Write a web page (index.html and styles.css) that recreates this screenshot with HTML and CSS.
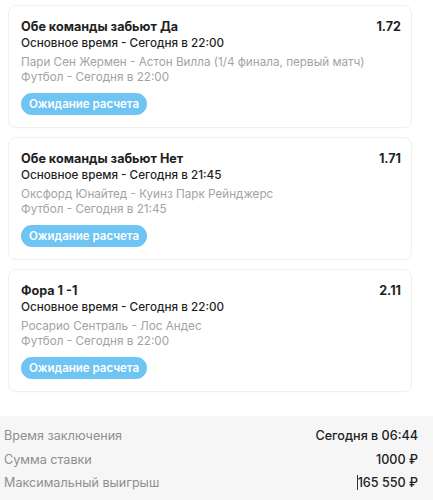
FILE: index.html
```html
<!DOCTYPE html>
<html lang="ru">

<head>
  <meta charset="UTF-8">
  <title>Купон</title>
  <link rel="stylesheet" href="styles.css">
</head>

<body>
  <div class="betList">
    <div class="betCard">
      <div class="betHead">
        <span class="betTitle">Обе команды забьют Да</span>
        <span class="betCoef">1.72</span>
      </div>
      <div class="betPeriod">Основное время - Сегодня в 22:00</div>
      <div class="betMeta">Пари Сен Жермен - Астон Вилла (1/4 финала, первый матч)</div>
      <div class="betMeta">Футбол - Сегодня в 22:00</div>
      <span class="betStatus">Ожидание расчета</span>
    </div>

    <div class="betCard">
      <div class="betHead">
        <span class="betTitle">Обе команды забьют Нет</span>
        <span class="betCoef">1.71</span>
      </div>
      <div class="betPeriod">Основное время - Сегодня в 21:45</div>
      <div class="betMeta">Оксфорд Юнайтед - Куинз Парк Рейнджерс</div>
      <div class="betMeta">Футбол - Сегодня в 21:45</div>
      <span class="betStatus">Ожидание расчета</span>
    </div>

    <div class="betCard">
      <div class="betHead">
        <span class="betTitle">Фора 1 -1</span>
        <span class="betCoef">2.11</span>
      </div>
      <div class="betPeriod">Основное время - Сегодня в 22:00</div>
      <div class="betMeta">Росарио Сентраль - Лос Андес</div>
      <div class="betMeta">Футбол - Сегодня в 22:00</div>
      <span class="betStatus">Ожидание расчета</span>
    </div>
  </div>

  <div class="summary">
    <div class="summaryRow">
      <span class="summaryLabel">Время заключения</span>
      <span class="summaryValue">Сегодня в 06:44</span>
    </div>
    <div class="summaryRow">
      <span class="summaryLabel">Сумма ставки</span>
      <span class="summaryValue">1000 ₽</span>
    </div>
    <div class="summaryRow">
      <span class="summaryLabel">Максимальный выигрыш</span>
      <span class="summaryValue"><span class="caret"></span>165 550 ₽</span>
    </div>
    <div class="summaryRow">
      <span class="summaryLabel"></span>
      <span class="statusDot"></span>
    </div>
  </div>
</body>

</html>
```

FILE: styles.css
```css
body {
  margin: 0;
  background-color: white;
  font-family: Inter, "Noto Sans", sans-serif;
  color: #1f1f1f;
}

.betList {
  padding: 5px 21px 24px 8px;
  display: flex;
  flex-direction: column;
  gap: 9px;
}

.betCard {
  border: 1px solid #f0f0f0;
  border-radius: 8px;
  padding: 12px 10px 12px 12px;
  box-shadow: rgba(0, 0, 0, 0.02) 0px 1px 3px;
}

.betHead {
  display: flex;
  justify-content: space-between;
  font-size: 12.6px;
  font-weight: 700;
  line-height: 17px;
}

.betPeriod {
  font-size: 11.7px;
  font-weight: 500;
  line-height: 17px;
  margin-bottom: 3px;
}

.betMeta {
  font-size: 11.7px;
  line-height: 15px;
  color: #a3a3a3;
}

.betStatus {
  display: inline-block;
  margin-top: 8px;
  padding: 0 8px;
  height: 22px;
  line-height: 22px;
  border-radius: 11px;
  background-color: #6ec4f3;
  color: white;
  font-size: 11.5px;
  font-weight: 600;
}

.summary {
  background-color: #f6f6f6;
  padding: 8px 15px 0 4px;
}

.summaryRow {
  display: flex;
  justify-content: space-between;
  align-items: center;
  height: 23.5px;
  font-size: 12.6px;
}

.summaryLabel {
  color: #8f8f8f;
}

.summaryValue {
  font-weight: 500;
  color: #222;
}

.caret {
  display: inline-block;
  width: 1px;
  height: 15px;
  background-color: #333;
  vertical-align: -3px;
}

.statusDot {
  width: 10px;
  height: 10px;
  margin-top: 14px;
  border-radius: 3px;
  background-color: #bfe8dc;
}
```
